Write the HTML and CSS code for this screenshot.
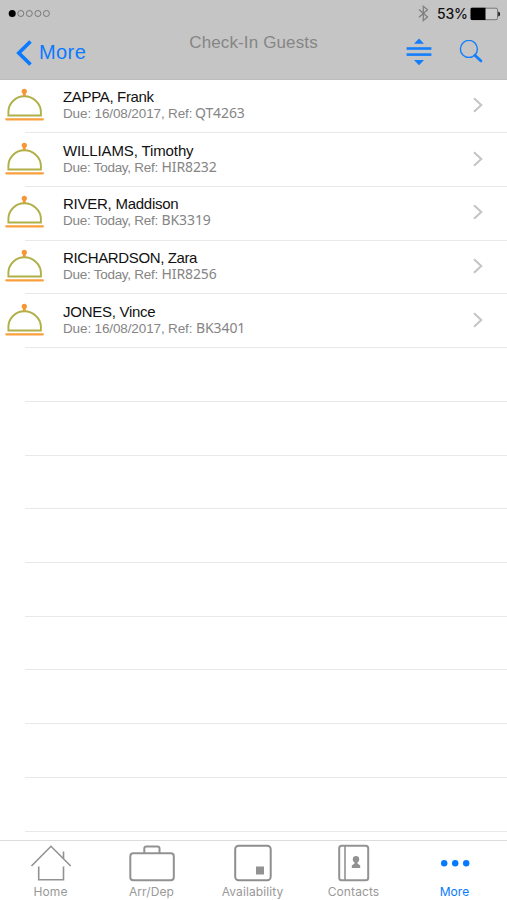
FILE: index.html
```html
<!DOCTYPE html>
<html lang="en">
<head>
<meta charset="utf-8">
<title>Check-In Guests</title>
<link rel="stylesheet" href="styles.css">
</head>
<body>
<svg class="defs" aria-hidden="true">
  <symbol id="bell" viewBox="0 0 40 36">
    <path d="M3.400 29.500V26C3.400 17.500 10.400 10.300 19.300 10.300S35.900 17.500 35.900 26V29.500Z" fill="#fff" stroke="#b0b048" stroke-width="1.900"/>
    <path d="M19.300 6V10" stroke="#f79633" stroke-width="2.800"/>
    <circle cx="19.300" cy="5.300" r="2.600" fill="#f79633"/>
    <path d="M1.300 33.300H37.900" stroke="#f9a03c" stroke-width="2.200" stroke-linecap="round"/>
  </symbol>
  <symbol id="chevron" viewBox="0 0 10 16">
    <path d="M1 1.200L8.300 8L1 14.800" fill="none" stroke="#c4c4c4" stroke-width="2"/>
  </symbol>
</svg>
<div class="app">
  <header class="header">
    <div class="status">
      <svg width="44" height="10" viewBox="0 0 44 10"><circle cx="4.200" cy="4.500" r="3.500"/><g fill="none" stroke="#777" stroke-width="1"><circle cx="12.800" cy="4.500" r="3"/><circle cx="21.300" cy="4.500" r="3"/><circle cx="29.900" cy="4.500" r="3"/><circle cx="38.400" cy="4.500" r="3"/></g></svg>
      <div class="power">
        <svg width="11" height="17" viewBox="0 0 11 17"><path d="M1 4.500L9.500 12L5.300 15.500V1.300L9.500 4.800L1 12.300" fill="none" stroke="#808080" stroke-width="1.300"/></svg>
        <span class="percent">53%</span>
        <svg width="31" height="14" viewBox="0 0 31 14"><rect x="2" y="1.200" width="26.500" height="11.500" rx="1.500" fill="#cecece" stroke="#777" stroke-width="1"/><path d="M2.800.8H16.500V13H2.800Q1.600 13 1.600 11.800V2Q1.600.8 2.800.8Z"/><path d="M29.300 4.500Q31 5 31 7T29.300 9.500Z"/></svg>
      </div>
    </div>
    <nav class="nav">
      <a class="back"><svg width="17" height="26" viewBox="0 0 17 26"><path d="M14.500 1.500L2.800 13L14.500 24.500" fill="none" stroke="#0a7aff" stroke-width="3.700"/></svg><span>More</span></a>
      <h1 class="title">Check-In Guests</h1>
      <div class="actions">
        <svg width="26" height="28" viewBox="0 0 26 28"><g fill="#157efb"><path d="M8 5.700L13 .6L18 5.700ZM8 22L13 27.200L18 22Z"/><rect x=".6" y="9.200" width="24.800" height="2.600"/><rect x=".6" y="15.300" width="24.800" height="2.600"/></g></svg>
        <svg width="24" height="24" viewBox="0 0 24 24"><circle cx="9.900" cy="8.900" r="8.500" fill="none" stroke="#157efb" stroke-width="1.400"/><path d="M15.900 15.200L22 20.900" stroke="#157efb" stroke-width="2.800" stroke-linecap="round"/></svg>
      </div>
    </nav>
  </header>
  <main class="list">
    <div class="row"><svg class="bell"><use href="#bell"/></svg><div class="body"><div class="text"><div class="name n1">ZAPPA, Frank</div><div class="meta"><span class="due long tight">Due: 16/08/2017, Ref:</span><span class="ref">QT4263</span></div></div><svg class="chev"><use href="#chevron"/></svg></div></div>
    <div class="row"><svg class="bell"><use href="#bell"/></svg><div class="body"><div class="text"><div class="name n2">WILLIAMS, Timothy</div><div class="meta"><span class="due">Due: Today, Ref:</span><span class="ref">HIR8232</span></div></div><svg class="chev"><use href="#chevron"/></svg></div></div>
    <div class="row"><svg class="bell"><use href="#bell"/></svg><div class="body"><div class="text"><div class="name n3">RIVER, Maddison</div><div class="meta"><span class="due">Due: Today, Ref:</span><span class="ref">BK3319</span></div></div><svg class="chev"><use href="#chevron"/></svg></div></div>
    <div class="row"><svg class="bell"><use href="#bell"/></svg><div class="body"><div class="text"><div class="name n4">RICHARDSON, Zara</div><div class="meta"><span class="due">Due: Today, Ref:</span><span class="ref">HIR8256</span></div></div><svg class="chev"><use href="#chevron"/></svg></div></div>
    <div class="row"><svg class="bell"><use href="#bell"/></svg><div class="body"><div class="text"><div class="name n5">JONES, Vince</div><div class="meta"><span class="due long">Due: 16/08/2017, Ref:</span><span class="ref">BK3401</span></div></div><svg class="chev"><use href="#chevron"/></svg></div></div>
    <div class="row"><div class="body"></div></div>
    <div class="row"><div class="body"></div></div>
    <div class="row"><div class="body"></div></div>
    <div class="row"><div class="body"></div></div>
    <div class="row"><div class="body"></div></div>
    <div class="row"><div class="body"></div></div>
    <div class="row"><div class="body"></div></div>
    <div class="row"><div class="body"></div></div>
    <div class="row"><div class="body"></div></div>
  </main>
  <footer class="tabs">
    <a class="tab"><svg width="42" height="40" viewBox="0 0 42 40"><g fill="none" stroke="#929292" stroke-width="1.600"><path d="M1.500 22L21 2.300L40.700 22M8.700 22.500V35.800H33.500V22.500M33.500 7.500V14.500"/></g></svg><span>Home</span></a>
    <a class="tab"><svg width="46" height="40" viewBox="0 0 46 40"><g fill="none" stroke="#929292" stroke-width="2"><rect x="1.300" y="9.300" width="43.500" height="27" rx="3"/><path d="M15.300 9V4.500Q15.300 2.500 17.300 2.500H28.500Q30.500 2.500 30.500 4.500V9"/></g></svg><span>Arr/Dep</span></a>
    <a class="tab"><svg width="38" height="40" viewBox="0 0 38 40"><rect x="1.200" y="1.700" width="35.500" height="34.500" rx="3.500" fill="none" stroke="#8e8e8e" stroke-width="2"/><rect x="22" y="22.500" width="8" height="8" fill="#929292"/></svg><span>Availability</span></a>
    <a class="tab"><svg width="32" height="40" viewBox="0 0 32 40"><g fill="none" stroke="#929292" stroke-width="2"><rect x="1.200" y="1.700" width="29" height="34.500" rx="2.500"/><path d="M7 2V36" stroke-width="1.600"/></g><circle cx="18" cy="15.300" r="3.200" fill="#929292"/><path d="M16.500 17H19.500V19.500L22.200 21.500V24H13.800V21.500L16.500 19.500Z" fill="#929292"/></svg><span>Contacts</span></a>
    <a class="tab active"><svg width="30" height="40" viewBox="0 0 30 40"><g fill="#067aff"><circle cx="4.200" cy="19.300" r="3.200"/><circle cx="15.200" cy="19.300" r="3.200"/><circle cx="26.200" cy="19.300" r="3.200"/></g></svg><span>More</span></a>
  </footer>
</div>
</body>
</html>
```
FILE: styles.css
```css
* { box-sizing: border-box; }
body { margin: 0; background: #fff; font-family: "Liberation Sans", Arial, sans-serif; }
svg { display: block; flex: none; }
.defs { display: none; }
.app { display: flex; flex-direction: column; width: 507px; height: 900px; overflow: hidden; }
.header { flex: none; height: 79.500px; background: #c5c5c5; border-bottom: 1px solid #bdbdbd; }
.status { display: flex; align-items: center; justify-content: space-between; height: 27px; padding: 0 7px 0 8px; }
.power { display: flex; align-items: center; }
.percent { width: 32px; margin-left: 8px; font: 500 14px/20px Inter, sans-serif; letter-spacing: -.2px; color: #111; }
.nav { display: grid; grid-template-columns: 1fr 130px 1fr; height: 51px; }
.back { display: flex; align-items: center; gap: 6px; height: 50px; padding: 1px 0 0 16px; font-size: 20px; letter-spacing: .4px; color: #0a7aff; }
.title { margin: 5px 0 0; text-align: center; white-space: nowrap; font-size: 17px; line-height: 22px; font-weight: 400; letter-spacing: .13px; color: #858585; }
.actions { display: flex; justify-content: flex-end; align-items: center; gap: 27px; height: 50px; padding-right: 24px; }
.list { flex: none; height: 760px; }
.row { display: flex; height: 53.720px; }
.bell { width: 40px; height: 36px; margin: 6.500px 0 0 4.500px; }
.body { display: flex; flex: 1; border-bottom: 1px solid #e8e8e8; margin-left: 25px; }
.bell + .body { margin-left: -19.500px; padding: 0 24.500px 0 38px; justify-content: space-between; }
.text { padding-top: 8.300px; white-space: nowrap; }
.name { font-size: 15px; line-height: 17px; color: #111; }
.n1 { letter-spacing: -.33px; }
.n2 { letter-spacing: -.12px; }
.n3 { letter-spacing: -.25px; }
.n4 { letter-spacing: -.37px; }
.n5 { letter-spacing: -.27px; }
.meta { display: flex; font-size: 13.500px; line-height: 18px; color: #858585; }
.due { width: 98.500px; letter-spacing: -.27px; }
.long { width: 133px; letter-spacing: -.13px; }
.tight { width: 132px; }
.ref { margin-top: -1px; font: 14px/18px "Noto Sans", sans-serif; letter-spacing: -.1px; }
.chev { width: 10px; height: 16px; margin-top: 17.500px; }
.tabs { display: grid; grid-template-columns: repeat(5, 1fr); flex: 1; border-top: 1px solid #dcdcdc; padding: 3px 2px 0 0; background: #fff; }
.tab { display: flex; flex-direction: column; align-items: center; font: 12px/16px Inter, sans-serif; letter-spacing: .1px; color: #999; }
.active { color: #067aff; }
```
